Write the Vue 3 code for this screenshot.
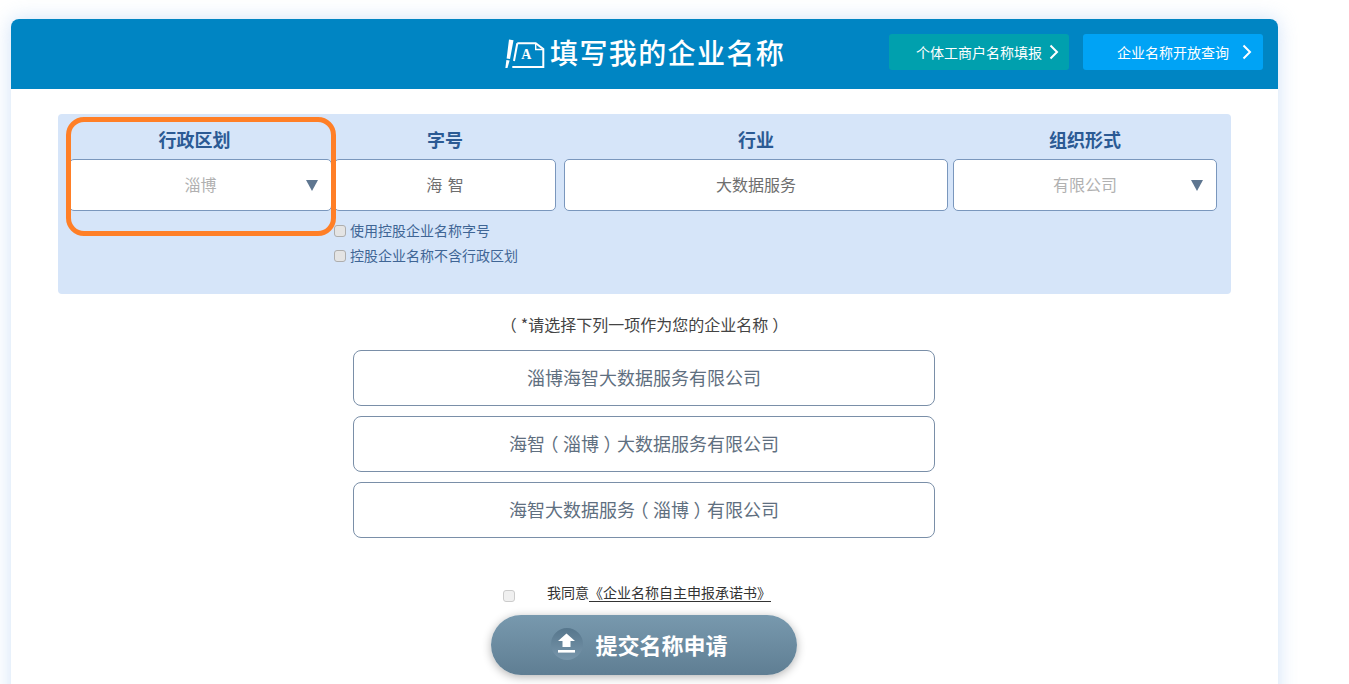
<script setup>
</script>

<template>
  <div class="page">
    <div class="card">
      <header class="head">
        <div class="title">
          <svg class="title-icon" width="42" height="30" viewBox="0 0 42 30">
            <path d="M5 0.5 L9.5 1.2 L6 20 L2.6 19.5 Z" fill="#fff" />
            <path d="M2.4 21 L5.6 21.5 L3.5 29 L1.4 29 Z" fill="#fff" />
            <path d="M13.3 4.3 H31.7 L39.3 10 V28 H8.3" fill="none" stroke="#fff" stroke-width="2" />
            <path d="M13.3 4.3 L10 22" fill="none" stroke="#fff" stroke-width="2" />
            <path d="M31.7 5 V10.5 H39" fill="none" stroke="#fff" stroke-width="1.4" />
            <text x="17.2" y="20" class="icon-a">A</text>
          </svg>
          <span>填写我的企业名称</span>
        </div>
        <a class="hbtn teal">
          <span class="t1">个体工商户名称填报</span>
          <svg width="10" height="16" viewBox="0 0 10 16"><path d="M1.5 1.5 L8 8 L1.5 14.5" fill="none" stroke="#fff" stroke-width="2" /></svg>
        </a>
        <a class="hbtn sky">
          <span class="t2">企业名称开放查询</span>
          <svg width="10" height="16" viewBox="0 0 10 16"><path d="M1.5 1.5 L8 8 L1.5 14.5" fill="none" stroke="#fff" stroke-width="2" /></svg>
        </a>
      </header>

      <section class="panel">
        <div class="field f1">
          <div class="label shift">行政区划</div>
          <div class="box select"><span class="val grey">淄博</span><i class="tri"></i></div>
        </div>
        <div class="field f2">
          <div class="label">字号</div>
          <div class="box"><span class="val dark spaced">海 智</span></div>
          <label class="chk first"><input type="checkbox" /><span>使用控股企业名称字号</span></label>
          <label class="chk"><input type="checkbox" /><span>控股企业名称不含行政区划</span></label>
        </div>
        <div class="field f3">
          <div class="label">行业</div>
          <div class="box"><span class="val dark">大数据服务</span></div>
        </div>
        <div class="field f4">
          <div class="label">组织形式</div>
          <div class="box select"><span class="val grey">有限公司</span><i class="tri"></i></div>
        </div>
        <div class="mark"></div>
      </section>

      <p class="hint"><span class="par">（</span>*请选择下列一项作为您的企业名称<span class="par">）</span></p>

      <div class="options">
        <div class="opt"><span>淄博海智大数据服务有限公司</span></div>
        <div class="opt"><span>海智<span class="par">（</span>淄博<span class="par">）</span>大数据服务有限公司</span></div>
        <div class="opt"><span>海智大数据服务<span class="par">（</span>淄博<span class="par">）</span>有限公司</span></div>
      </div>

      <div class="agree">
        <input type="checkbox" />
        <span class="agree-text">我同意<u>《企业名称自主申报承诺书》</u></span>
      </div>

      <button class="submit">
        <span class="up">
          <svg width="22" height="22" viewBox="0 0 22 22">
            <path d="M10.5 0.5 L19 8 H14.5 V14 H6.5 V8 H2 Z" fill="#fff" />
            <rect x="2" y="17" width="17" height="2.6" fill="#fff" />
          </svg>
        </span>
        <span>提交名称申请</span>
      </button>
    </div>
  </div>
</template>

<style>
html, body { margin: 0; background: #fff; overflow: hidden; }
</style>

<style scoped>
.page {
  width: 1349px;
  height: 684px;
  overflow: hidden;
  padding: 19px 0 0 11px;
  box-sizing: border-box;
  font-family: "Noto Sans CJK SC", "Liberation Sans", sans-serif;
}
.card {
  width: 1267px;
  height: 720px;
  background: #fff;
  border-radius: 8px 8px 0 0;
  box-shadow: 0 0 20px rgba(150, 190, 240, 0.45);
  display: flex;
  flex-direction: column;
}
.head {
  height: 70px;
  background: #0085c3;
  border-radius: 8px 8px 0 0;
  display: flex;
  align-items: center;
  flex: none;
  box-sizing: border-box;
  padding-bottom: 4px;
}
.title {
  margin-left: 493px;
  width: 385px;
  display: flex;
  align-items: center;
  color: #fff;
  font-size: 28px;
  font-weight: 500;
  letter-spacing: 1.4px;
  line-height: 30px;
}
.title-icon { flex: none; margin-right: 4px; margin-top: 3px; }
.icon-a { font-family: "Liberation Serif", serif; font-size: 14px; font-weight: 700; fill: #fff; letter-spacing: 0; }
.hbtn {
  width: 180px;
  height: 36px;
  border-radius: 3px;
  display: flex;
  align-items: center;
  color: #fff;
  font-size: 14px;
  box-sizing: border-box;
  margin-right: 14px;
  white-space: nowrap;
}
.teal { background: #00a0ae; padding-left: 27px; }
.sky { background: #00a3f5; padding-left: 34px; margin-right: 0; }
.t1 { width: 133px; }
.t2 { width: 125px; }
.panel {
  position: relative;
  margin: 25px 0 0 47px;
  width: 1173px;
  height: 180px;
  background: #d6e5f9;
  border-radius: 4px;
  display: flex;
  flex: none;
  padding-left: 11px;
  box-sizing: border-box;
}
.field { flex: none; }
.f1 { width: 263px; margin-right: 2px; }
.f2 { width: 222px; margin-right: 8px; }
.f3 { width: 384px; margin-right: 5px; }
.f4 { width: 264px; }
.label {
  height: 45px;
  line-height: 51px;
  text-align: center;
  font-size: 18px;
  font-weight: 700;
  color: #2b5a94;
}
.label.shift { padding-right: 12px; }
.box {
  height: 52px;
  box-sizing: border-box;
  border: 1px solid #7a97bd;
  border-radius: 5px;
  background: #fff;
  display: flex;
  align-items: center;
  justify-content: center;
  position: relative;
  font-size: 16px;
  padding-bottom: 2px;
}
.val.grey { color: #b1b1b1; }
.val.dark { color: #6e6e6e; }
.val.spaced { word-spacing: 2px; }
.tri {
  position: absolute;
  right: 13px;
  top: 20px;
  width: 0;
  height: 0;
  border-left: 6px solid transparent;
  border-right: 6px solid transparent;
  border-top: 11px solid #5e7690;
}
.chk {
  display: flex;
  align-items: center;
  height: 25px;
  font-size: 14px;
  color: #3f6595;
  white-space: nowrap;
}
.chk.first { margin-top: 6px; }
input[type="checkbox"] {
  appearance: none;
  -webkit-appearance: none;
  width: 12px;
  height: 12px;
  margin: 0 4px 0 0;
  flex: none;
  box-sizing: border-box;
  border: 1px solid #aeaeae;
  border-radius: 3px;
  background: #e4e4e4;
}
.chk input { margin-top: 2px; }
.mark {
  position: absolute;
  left: 8px;
  top: 3px;
  width: 270px;
  height: 119px;
  box-sizing: border-box;
  border: 5px solid #ff7f27;
  border-radius: 18px;
  pointer-events: none;
}
.hint {
  margin: 20px 0 0 0;
  height: 21px;
  line-height: 21px;
  text-align: center;
  font-size: 16px;
  color: #444;
}
.par {
  display: inline-block;
  width: 1em;
  text-align: center;
  font-feature-settings: "halt";
}
.options {
  margin: 15px 0 0 342px;
  width: 582px;
  display: flex;
  flex-direction: column;
  gap: 10px;
}
.opt {
  height: 56px;
  box-sizing: border-box;
  border: 1px solid #7a8fa8;
  border-radius: 8px;
  display: flex;
  align-items: center;
  justify-content: center;
  font-size: 18px;
  color: #5f6f80;
  padding-bottom: 2px;
}
.agree {
  margin: 46px 0 0 492px;
  height: 20px;
  display: flex;
  align-items: center;
  font-size: 14px;
  color: #333;
}
.agree input { margin: 3px 0 0 0; background: #f0f0f0; border-color: #ccc; }
.agree-text { margin-left: 32px; white-space: nowrap; margin-top: -4px; }
.agree u { text-underline-offset: 3px; }
.submit {
  margin: 11px 0 0 480px;
  width: 306px;
  height: 60px;
  border: none;
  border-radius: 30px;
  flex: none;
  background: linear-gradient(#7899ae, #5f7e93);
  box-shadow: 0 2px 10px rgba(0, 0, 0, 0.3);
  color: #fff;
  font-family: inherit;
  font-size: 22px;
  font-weight: 700;
  display: flex;
  align-items: center;
  justify-content: center;
  gap: 12px;
  padding: 0 9px 2px 0;
}
.up {
  width: 32px;
  height: 32px;
  border-radius: 50%;
  background: linear-gradient(#56768c, #7896ab);
  display: flex;
  align-items: center;
  justify-content: center;
}
</style>
